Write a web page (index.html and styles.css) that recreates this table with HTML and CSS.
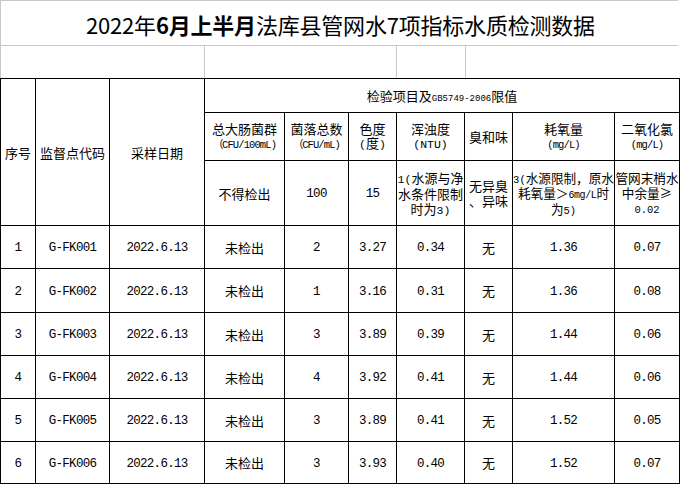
FILE: index.html
```html
<!DOCTYPE html>
<html lang="zh-CN">
<head>
<meta charset="utf-8">
<title>2022年6月上半月法库县管网水7项指标水质检测数据</title>
<link rel="stylesheet" href="styles.css">
</head>
<body>
<div class="sheet">
  <div class="top">
    <div class="title"><span>2022年<b>6月上半月</b>法库县管网水7项指标水质检测数据</span></div>
    <div class="blank"></div>
    <div class="blank"></div>
    <div class="blank"></div>
    <div class="blank"></div>
  </div>
  <div class="grid">
    <div class="c tall">序号</div>
    <div class="c tall">监督点代码</div>
    <div class="c tall">采样日期</div>
    <div class="c group"><div>检验项目及<span class="sm">GB5749-2006</span>限值</div></div>

    <div class="c two"><div>总大肠菌群<br><span class="hm">（CFU/100mL)</span></div></div>
    <div class="c two"><div>菌落总数<br><span class="hm">（CFU/mL)</span></div></div>
    <div class="c two"><div>色度<br><span class="m">(</span>度<span class="m">)</span></div></div>
    <div class="c two"><div>浑浊度<br><span class="m">(NTU)</span></div></div>
    <div class="c two">臭和味</div>
    <div class="c two"><div>耗氧量<br><span class="hm">(mg/L)</span></div></div>
    <div class="c two"><div>二氧化氯<br><span class="hm">(mg/L)</span></div></div>

    <div class="c lim">不得检出</div>
    <div class="c lim m">100</div>
    <div class="c lim m">15</div>
    <div class="c lim"><div><span class="m">1(</span>水源与净<br>水条件限制<br>时为<span class="m">3)</span></div></div>
    <div class="c lim"><div>无异臭<br>、异味</div></div>
    <div class="c lim fit"><div><span class="m">3(</span>水源限制，原水<br>耗氧量＞<span class="ms">6mg/L</span>时<br>为<span class="m">5)</span></div></div>
    <div class="c lim fit"><div>管网末梢水<br>中余量≥<br><span class="m">0.02</span></div></div>

    <div class="c m">1</div><div class="c m">G-FK001</div><div class="c m">2022.6.13</div><div class="c">未检出</div><div class="c m">2</div><div class="c m">3.27</div><div class="c m">0.34</div><div class="c">无</div><div class="c m">1.36</div><div class="c m">0.07</div>
    <div class="c m">2</div><div class="c m">G-FK002</div><div class="c m">2022.6.13</div><div class="c">未检出</div><div class="c m">1</div><div class="c m">3.16</div><div class="c m">0.31</div><div class="c">无</div><div class="c m">1.36</div><div class="c m">0.08</div>
    <div class="c m">3</div><div class="c m">G-FK003</div><div class="c m">2022.6.13</div><div class="c">未检出</div><div class="c m">3</div><div class="c m">3.89</div><div class="c m">0.39</div><div class="c">无</div><div class="c m">1.44</div><div class="c m">0.06</div>
    <div class="c m">4</div><div class="c m">G-FK004</div><div class="c m">2022.6.13</div><div class="c">未检出</div><div class="c m">4</div><div class="c m">3.92</div><div class="c m">0.41</div><div class="c">无</div><div class="c m">1.44</div><div class="c m">0.06</div>
    <div class="c m">5</div><div class="c m">G-FK005</div><div class="c m">2022.6.13</div><div class="c">未检出</div><div class="c m">3</div><div class="c m">3.89</div><div class="c m">0.41</div><div class="c">无</div><div class="c m">1.52</div><div class="c m">0.05</div>
    <div class="c m">6</div><div class="c m">G-FK006</div><div class="c m">2022.6.13</div><div class="c">未检出</div><div class="c m">3</div><div class="c m">3.93</div><div class="c m">0.40</div><div class="c">无</div><div class="c m">1.52</div><div class="c m">0.07</div>
  </div>
</div>
</body>
</html>
```
FILE: styles.css
```css
html, body {
  margin: 0;
  padding: 0;
  background: #fff;
}
body {
  font-family: "Noto Sans CJK SC", "Noto Sans", sans-serif;
  font-size: 13px;
  color: #000;
}
.sheet {
  width: 683px;
}
.top {
  display: grid;
  grid-template-columns: 203px 191px 68px 214px;
  grid-template-rows: 44px 32px;
  gap: 1px;
  padding: 1px 1px 0 1px;
  background: #c8c8c8;
  width: 676px;
}
.title {
  grid-column: 1 / -1;
  background: #fff;
  display: flex;
  align-items: center;
  justify-content: center;
  font-size: 22px;
  line-height: 1;
  padding-top: 1px;
  letter-spacing: -0.2px;
}
.title b {
  font-weight: 700;
}
.blank {
  background: #fff;
}
.grid {
  display: grid;
  grid-template-columns: 34px 73px 94px 79px 63px 47px 67px 47px 101px 64px;
  grid-template-rows: 33px 47px 64px 42px 43px 42px 42px 42px 41px;
  gap: 1px;
  padding: 1px;
  background: #000;
  width: 678px;
}
.c {
  background: #fff;
  display: flex;
  align-items: center;
  justify-content: center;
  text-align: center;
  line-height: 15px;
  white-space: nowrap;
}
.c.m {
  padding-top: 3px;
  font-size: 12.5px;
  letter-spacing: -0.7px;
}
.tall {
  grid-row: 1 / 4;
}
.group {
  grid-column: 4 / 11;
}
.two {
  line-height: 14px;
}
.lim {
  line-height: 15px;
}
.fit {
  font-size: 12.6px;
}
.m {
  font-family: "Liberation Mono", monospace;
  font-size: 11.5px;
  line-height: 1;
}
.fit .m {
  font-size: 10.5px;
}
.ms {
  font-family: "Liberation Mono", monospace;
  font-size: 10px;
  letter-spacing: -0.4px;
  line-height: 1;
}
.hm {
  font-family: "Liberation Mono", monospace;
  font-size: 10.5px;
  letter-spacing: -0.9px;
  line-height: 1;
}
.sm {
  font-family: "Liberation Mono", monospace;
  font-size: 9px;
  line-height: 1;
}
```
